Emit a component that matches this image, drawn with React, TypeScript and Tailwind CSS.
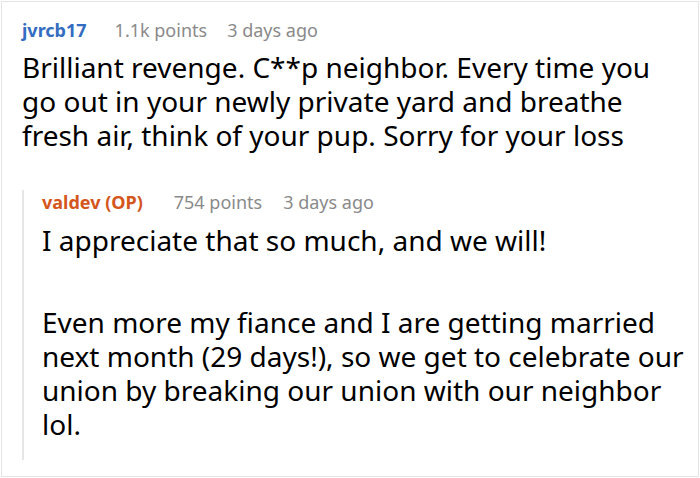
export default function App() {
  return (
    <div className="h-[478px] w-[700px] bg-white p-px font-['Noto_Sans',sans-serif]">
      <div className="h-full border border-[#e4e4e4] pl-[20px] pr-2 pt-[16px]">
        <div className="flex items-baseline text-[18px] leading-6">
          <span className="mr-[28px] font-bold text-[#336cc1]">jvrcb17</span>
          <span className="mr-[20px] text-[#8a8a8a]">1.1k points</span>
          <span className="text-[#8a8a8a]">3 days ago</span>
        </div>
        <p className="mt-[8px] text-[28px] leading-[34px] text-black">
          Brilliant revenge. C**p neighbor. Every time you go out in your newly private yard and breathe fresh air,
          think of your pup. Sorry for your loss
        </p>
        <div className="mt-[48px] border-l-2 border-[#e6e6e6] pb-[19px] pl-[18px]">
          <div className="-mt-[10px] flex items-baseline text-[18px] leading-6">
            <span className="mr-[31px] font-bold text-[#d4561c]">valdev (OP)</span>
            <span className="mr-[21px] text-[#8a8a8a]">754 points</span>
            <span className="text-[#8a8a8a]">3 days ago</span>
          </div>
          <p className="mt-[9px] text-[28px] leading-[34px] text-black">I appreciate that so much, and we will!</p>
          <p className="mt-[48px] text-[28px] leading-[34px] text-black">
            Even more my fiance and I are getting married next month (29 days!), so we get to celebrate our union by
            breaking our union with our neighbor lol.
          </p>
        </div>
      </div>
    </div>
  );
}
